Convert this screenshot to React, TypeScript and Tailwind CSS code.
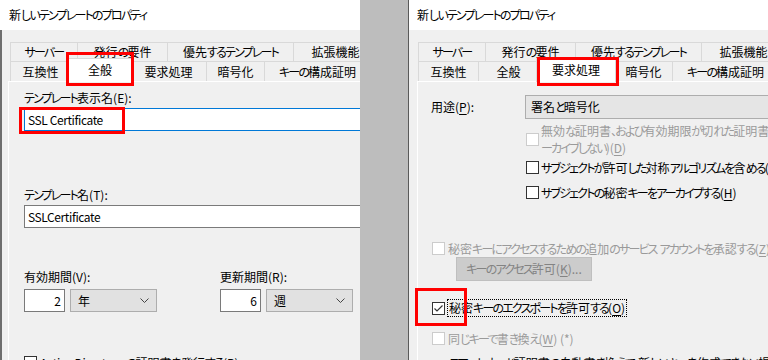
import type { ReactNode } from 'react'

const FONT = "font-['Noto_Sans_CJK_JP',sans-serif] [font-feature-settings:'palt']"

const ROW1 = [
  { label: 'サーバー', w: 'w-[67px]' },
  { label: '発行の要件', w: 'w-[90px]' },
  { label: '優先するテンプレート', w: 'w-[126px]' },
  { label: '拡張機能', w: 'w-[84px]' },
]

const ROW2 = [
  { label: '互換性', w: 'w-[60px]', sel: 'w-[64px]' },
  { label: '全般', w: 'w-[60px]', sel: 'w-[64px]' },
  { label: '要求処理', w: 'w-[76px]', sel: 'w-[80px]' },
  { label: '暗号化', w: 'w-[58px]', sel: 'w-[62px]' },
  { label: 'キーの構成証明', w: 'w-[106px]', sel: 'w-[110px]' },
]

export default function App() {
  return (
    <div className={`flex h-[360px] w-[768px] overflow-hidden bg-[#bdbdbd] text-[12px] leading-[16px] text-black ${FONT}`}>
      <GeneralDialog />
      <div className="w-[48px] shrink-0" />
      <RequestDialog />
    </div>
  )
}

function GeneralDialog() {
  return (
    <div className="relative flex w-[360px] shrink-0 flex-col overflow-hidden bg-[#f0f0f0]">
      <div className="flex h-[30px] shrink-0 items-center bg-white pl-[9px] whitespace-nowrap">
        <J t="新しいテンプレートのプロパティ" />
      </div>
      <div className="flex flex-1 flex-col border-l-2 border-[#6e6e6e]">
        <div className="ml-[8px] mt-[12px]">
          <Tabs selected="全般" />
        </div>
        <div className="ml-[6px] flex-1 border-l border-t border-white pl-[15px] pt-[8px] whitespace-nowrap">
          <div><J t="テンプレート表示名(E):" /></div>
          <div className="mt-[2px] flex h-[23px] w-[345px] items-center border border-[#0078d7] bg-white pl-[3px] tracking-[-0.4px]">SSL Certificate</div>

          <div className="mt-[56px]"><J t="テンプレート名(T):" /></div>
          <div className="mt-[2px] flex h-[23px] w-[345px] items-center border border-[#7a7a7a] bg-white pl-[3px] tracking-[-0.4px]">SSLCertificate</div>

          <div className="mt-[41px] grid grid-cols-[196px_196px]">
            <Period label="有効期間(V):" value="2" unit="年" />
            <Period label="更新期間(R):" value="6" unit="週" />
          </div>

          <div className="mt-[44px] flex items-start gap-[3px]">
            <Checkbox />
            <span className="-mt-[1px]">
              <span className="tracking-[-0.3px]">Active Directory </span>
              <J t="の証明書を発行する(P)" />
            </span>
          </div>
        </div>
      </div>

      {/* annotations */}
      <div className="absolute left-[66px] top-[52px] z-20 h-[34px] w-[68px] border-[3px] border-[#ff0000]" />
      <div className="absolute left-[19px] top-[107px] z-20 h-[27px] w-[106px] border-[3px] border-[#ff0000]" />
    </div>
  )
}

function RequestDialog() {
  return (
    <div className="relative flex w-[360px] shrink-0 flex-col overflow-hidden border-l border-[#5a5a5a] bg-[#f0f0f0]">
      <div className="flex h-[30px] shrink-0 items-center bg-white pl-[8px] whitespace-nowrap">
        <J t="新しいテンプレートのプロパティ" />
      </div>
      <div className="ml-[9px] mt-[12px]">
        <Tabs selected="要求処理" />
      </div>
      <div className="ml-[8px] flex-1 border-l border-t border-white pl-[13px] pt-[13px] whitespace-nowrap">
        <div className="flex items-center">
          <span className="w-[94px] shrink-0">用途(<U>P</U>):</span>
          <div className="flex h-[24px] w-[260px] shrink-0 items-center border border-[#adadad] bg-[#e5e5e5] pl-[5px]">
            <J t="署名と暗号化" />
          </div>
        </div>

        <div className="ml-[95px] mt-[3px] flex items-center gap-[2px] leading-[17px] text-[#9a9a9a]">
          <Checkbox disabled />
          <span>
            <J t="無効な証明書、および有効期限が切れた証明書をア" />
            <br />
            <J t="ーカイブしない)(" />
            <U>D</U>)
          </span>
        </div>

        <div className="ml-[95px] mt-[3px] flex items-center gap-[2px] leading-[17px]">
          <Checkbox />
          <span>
            <J t="サブジェクトが許可した対称アルゴリズムを含める(" />
            <U>S</U>)
          </span>
        </div>

        <div className="ml-[95px] mt-[8px] flex items-center gap-[2px] leading-[17px]">
          <Checkbox />
          <span>
            <J t="サブジェクトの秘密キーをアーカイブする(" />
            <U>H</U>)
          </span>
        </div>

        <div className="ml-[1px] mt-[39px] flex items-center gap-[3px] leading-[17px] text-[#9a9a9a]">
          <Checkbox disabled />
          <span>
            <J t="秘密キーにアクセスするための追加のサービス アカウントを承認する(" />
            <U>Z</U>)
          </span>
        </div>

        <div className="ml-[25px] flex h-[24px] w-[136px] items-center justify-center border border-[#bfbfbf] bg-[#cccccc] text-[#838383]">
          <J t="キーのアクセス許可(" />
          <U>K</U>)...
        </div>

        <div className="ml-[1px] mt-[18px] flex h-[18px] items-center gap-[2px]">
          <Checkbox checked />
          <span className="border border-dotted border-black px-[1px] leading-[16px]">
            <J t="秘密キーのエクスポートを許可する(" />
            <U>O</U>)
          </span>
        </div>

        <div className="ml-[1px] mt-[13px] flex items-center gap-[3px] leading-[17px] text-[#9a9a9a]">
          <Checkbox disabled />
          <span>
            <J t="同じキーで書き換え(" />
            <U>W</U>) (*)
          </span>
        </div>

        <div className="ml-[18px] mt-[8px]">
          <J t="スマート カード証明書の自動書き換えで、新しいキーを作成できない場合" />
        </div>
      </div>

      {/* annotations */}
      <div className="absolute left-[128px] top-[57px] z-20 h-[29px] w-[82px] border-[3px] border-[#ff0000]" />
      <div className="absolute left-[6px] top-[288px] z-20 h-[38px] w-[52px] border-[3px] border-[#ff0000]" />
    </div>
  )
}

function Tabs({ selected }: { selected: string }) {
  return (
    <div className="whitespace-nowrap">
      <div className="flex h-[19px]">
        {ROW1.map((t) => (
          <div key={t.label} className={`flex shrink-0 items-center justify-center border-l border-t border-[#d9d9d9] ${t.w}`}>
            <J t={t.label} />
          </div>
        ))}
      </div>
      <div className="flex h-[20px]">
        {ROW2.map((t) =>
          t.label === selected ? (
            <div
              key={t.label}
              className={`relative z-10 -mx-[2px] -mt-[3px] flex h-[24px] shrink-0 items-center justify-center border-x border-t border-[#d9d9d9] bg-white pb-[1px] ${t.sel}`}
            >
              <J t={t.label} />
            </div>
          ) : (
            <div key={t.label} className={`flex h-[20px] shrink-0 items-center justify-center border-l border-t border-[#d9d9d9] ${t.w}`}>
              <J t={t.label} />
            </div>
          ),
        )}
      </div>
    </div>
  )
}

function Period({ label, value, unit }: { label: string; value: string; unit: string }) {
  return (
    <div>
      <div><J t={label} /></div>
      <div className="mt-[4px] flex gap-[5px]">
        <div className="flex h-[23px] w-[41px] items-center justify-end border border-[#7a7a7a] bg-white pr-[3px]">{value}</div>
        <div className="flex h-[23px] w-[87px] items-center justify-between border border-[#adadad] bg-[#e1e1e1] pl-[7px] pr-[7px]">
          <span>{unit}</span>
          <Chevron />
        </div>
      </div>
    </div>
  )
}

// kana in the original UI font are much narrower than in Noto, so tighten them
function J({ t }: { t: string }) {
  const parts = t.split(/([\u3000-\u30ff]+)/)
  return (
    <>
      {parts.map((p, i) =>
        i % 2 ? (
          <span key={i} className="tracking-[-1.8px]">{p}</span>
        ) : (
          p
        ),
      )}
    </>
  )
}

function Checkbox({ checked, disabled }: { checked?: boolean; disabled?: boolean }) {
  return (
    <span
      className={`flex h-[13px] w-[13px] shrink-0 items-center justify-center border bg-white ${
        disabled ? 'border-[#cccccc]' : 'border-[#333333]'
      }`}
    >
      {checked && (
        <svg width="11" height="11" viewBox="0 0 11 11" fill="none">
          <path d="M1.5 5.5L4 8L9.5 2.5" stroke="#333" strokeWidth="1.2" />
        </svg>
      )}
    </span>
  )
}

function Chevron() {
  return (
    <svg width="9" height="5" viewBox="0 0 9 5" fill="none">
      <path d="M0.5 0.5L4.5 4.5L8.5 0.5" stroke="#444" strokeWidth="1" />
    </svg>
  )
}

function U({ children }: { children: ReactNode }) {
  return <span className="underline underline-offset-2">{children}</span>
}
